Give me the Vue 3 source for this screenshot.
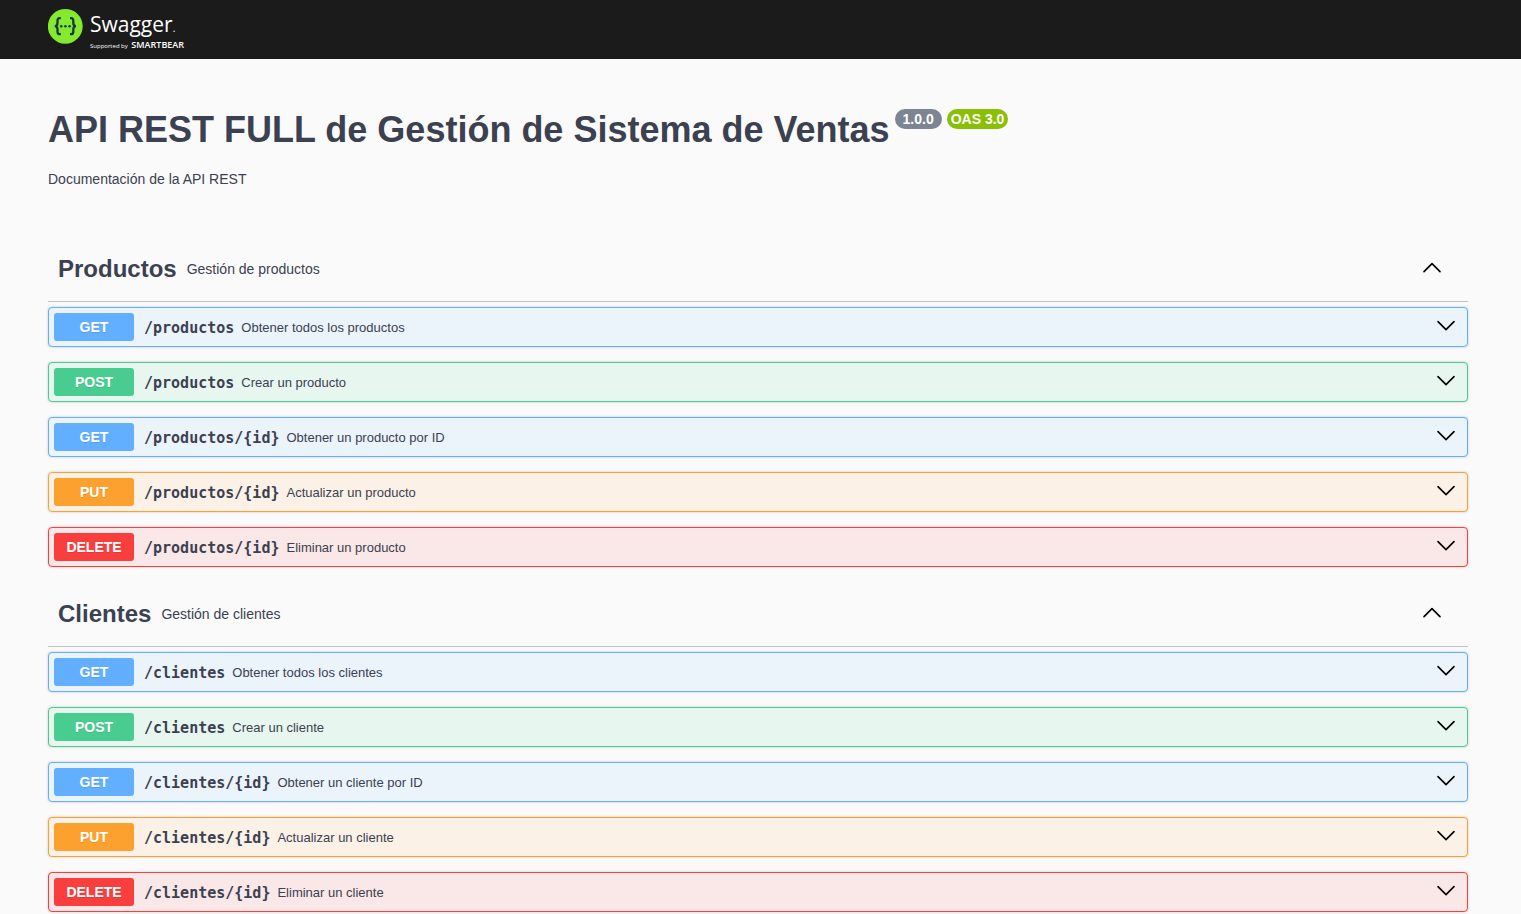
<script setup>
import { reactive } from 'vue'

const sections = reactive([
  {
    name: 'Productos',
    description: 'Gestión de productos',
    open: true,
    operations: [
      { method: 'get', path: '/productos', summary: 'Obtener todos los productos' },
      { method: 'post', path: '/productos', summary: 'Crear un producto' },
      { method: 'get', path: '/productos/{id}', summary: 'Obtener un producto por ID' },
      { method: 'put', path: '/productos/{id}', summary: 'Actualizar un producto' },
      { method: 'delete', path: '/productos/{id}', summary: 'Eliminar un producto' }
    ]
  },
  {
    name: 'Clientes',
    description: 'Gestión de clientes',
    open: true,
    operations: [
      { method: 'get', path: '/clientes', summary: 'Obtener todos los clientes' },
      { method: 'post', path: '/clientes', summary: 'Crear un cliente' },
      { method: 'get', path: '/clientes/{id}', summary: 'Obtener un cliente por ID' },
      { method: 'put', path: '/clientes/{id}', summary: 'Actualizar un cliente' },
      { method: 'delete', path: '/clientes/{id}', summary: 'Eliminar un cliente' }
    ]
  }
])
</script>

<template>
  <div class="page">
    <header class="topbar">
      <a class="brand" href="#">
        <svg class="brand-mark" viewBox="0 0 36 36" aria-hidden="true">
          <circle cx="17.3" cy="18.3" r="17.4" fill="#85ea2d" />
          <g fill="none" stroke="#173647" stroke-width="2.3">
            <path d="M12.8 10.2h-1c-1.7 0-2.3.9-2.3 2.5v2.4c0 1.9-.8 2.9-2.6 3.1 1.8.2 2.6 1.2 2.6 3.1v2.4c0 1.6.6 2.5 2.3 2.5h1" />
            <path d="M22 10.2h1c1.7 0 2.3.9 2.3 2.5v2.4c0 1.9.8 2.9 2.6 3.1-1.8.2-2.6 1.2-2.6 3.1v2.4c0 1.6-.6 2.5-2.3 2.5h-1" />
          </g>
          <g fill="#173647">
            <circle cx="13.2" cy="18.2" r="1.3" />
            <circle cx="17.4" cy="18.2" r="1.3" />
            <circle cx="21.6" cy="18.2" r="1.3" />
          </g>
        </svg>
        <span class="brand-text">
          <span class="brand-name">Swagger<span class="brand-dot">.</span></span>
          <span class="brand-support">Supported by <b>SMARTBEAR</b></span>
        </span>
      </a>
    </header>

    <main class="wrapper">
      <section class="info">
        <h1 class="title">
          <span>API REST FULL de Gestión de Sistema de Ventas</span>
          <span class="badges">
            <span class="badge">1.0.0</span>
            <span class="badge oas">OAS 3.0</span>
          </span>
        </h1>
        <p class="description">Documentación de la API REST</p>
      </section>

      <section v-for="section in sections" :key="section.name" class="tag">
        <div class="tag-header">
          <h2 class="tag-name">{{ section.name }}</h2>
          <p class="tag-description">{{ section.description }}</p>
          <button
            class="toggle"
            type="button"
            :aria-label="section.name"
            :aria-expanded="section.open"
            @click="section.open = !section.open"
          >
            <svg class="arrow" viewBox="0 0 20 20" aria-hidden="true">
              <path :d="section.open ? 'M2 12.6l8-8 8 8' : 'M2 4.6l8 8 8-8'" />
            </svg>
          </button>
        </div>
        <div v-if="section.open" class="operations">
          <button
            v-for="op in section.operations"
            :key="op.method + op.path"
            type="button"
            class="operation"
            :class="op.method"
          >
            <span class="method">{{ op.method.toUpperCase() }}</span>
            <span class="path">{{ op.path }}</span>
            <span class="summary">{{ op.summary }}</span>
            <svg class="arrow" viewBox="0 0 20 20" aria-hidden="true">
              <path d="M2 4.6l8 8 8-8" />
            </svg>
          </button>
        </div>
      </section>
    </main>
  </div>
</template>

<style>
body {
  margin: 0;
  background: #fafafa;
}
</style>

<style scoped>
.page {
  color: #3b4151;
  font-family: "Liberation Sans", Arial, sans-serif;
}

.page * {
  box-sizing: border-box;
}

.topbar {
  height: 59px;
  padding: 8px 48px;
  background: #1b1b1b;
}

.brand {
  display: inline-flex;
  gap: 6px;
  color: #fff;
  text-decoration: none;
  font-family: "Open Sans", sans-serif;
}

.brand-mark {
  width: 36px;
  height: 36px;
}

.brand-text {
  display: flex;
  flex-direction: column;
}

.brand-name {
  font-size: 21px;
  font-weight: 400;
  line-height: 33px;
}

.brand-dot {
  font-size: 10px;
  line-height: 10px;
}

.brand-support {
  font-size: 6px;
  line-height: 8px;
  white-space: nowrap;
}

.brand-support b {
  margin-left: 2px;
  font-size: 9px;
  font-weight: 600;
}

.wrapper {
  padding: 0 53px 0 48px;
}

.info {
  padding: 50px 0 49px;
}

.title {
  display: flex;
  align-items: flex-start;
  gap: 5px;
  margin: 0;
  font-size: 36px;
  line-height: 41px;
}

.badges {
  display: flex;
  gap: 5px;
}

.badge {
  height: 20px;
  padding: 0 8px;
  border-radius: 10px;
  background: #7d8492;
  color: #fff;
  font-size: 14px;
  line-height: 20px;
}

.badge.oas {
  padding: 0 4px;
  background: #89bf04;
}

.description {
  margin: 20px 0 0;
  font-size: 14px;
  line-height: 18px;
}

.tag {
  margin-bottom: 15px;
}

.tag-header {
  display: flex;
  align-items: center;
  height: 65px;
  margin-bottom: 5px;
  padding: 0 26px 0 10px;
  border-bottom: 1px solid rgba(59, 65, 81, 0.3);
}

.tag-name {
  margin: 0;
  font-size: 24px;
  line-height: 28px;
}

.tag-description {
  flex: 1;
  margin: 0;
  padding: 0 10px;
  font-size: 14px;
}

.toggle {
  display: flex;
  padding: 0;
  border: 0;
  background: none;
  cursor: pointer;
}

.arrow {
  flex: none;
  width: 20px;
  height: 20px;
  fill: none;
  stroke: #000;
  stroke-width: 1.6;
  stroke-linecap: round;
  stroke-linejoin: round;
}

.operations {
  display: flex;
  flex-direction: column;
  gap: 15px;
}

.operation {
  display: flex;
  align-items: center;
  width: 100%;
  padding: 5px 11px 5px 5px;
  border: 1px solid;
  border-radius: 4px;
  box-shadow: 0 0 3px rgba(0, 0, 0, 0.19);
  color: inherit;
  font-family: inherit;
  text-align: left;
  cursor: pointer;
}

.method {
  width: 80px;
  border-radius: 3px;
  color: #fff;
  font-size: 14px;
  font-weight: 700;
  line-height: 28px;
  text-align: center;
  text-shadow: 0 1px 0 rgba(0, 0, 0, 0.1);
}

.path {
  padding: 2px 7px 0 10px;
  font-family: Consolas, "DejaVu Sans Mono", monospace;
  font-size: 15px;
  font-weight: 700;
}

.summary {
  flex: 1;
  font-size: 13px;
}

.get {
  border-color: #61affe;
  background: #ebf3fb;
}

.get .method {
  background: #61affe;
}

.post {
  border-color: #49cc90;
  background: #e8f6f0;
}

.post .method {
  background: #49cc90;
}

.put {
  border-color: #fca130;
  background: #fbf1e6;
}

.put .method {
  background: #fca130;
}

.delete {
  border-color: #f93e3e;
  background: #fae7e7;
}

.delete .method {
  background: #f93e3e;
}
</style>
